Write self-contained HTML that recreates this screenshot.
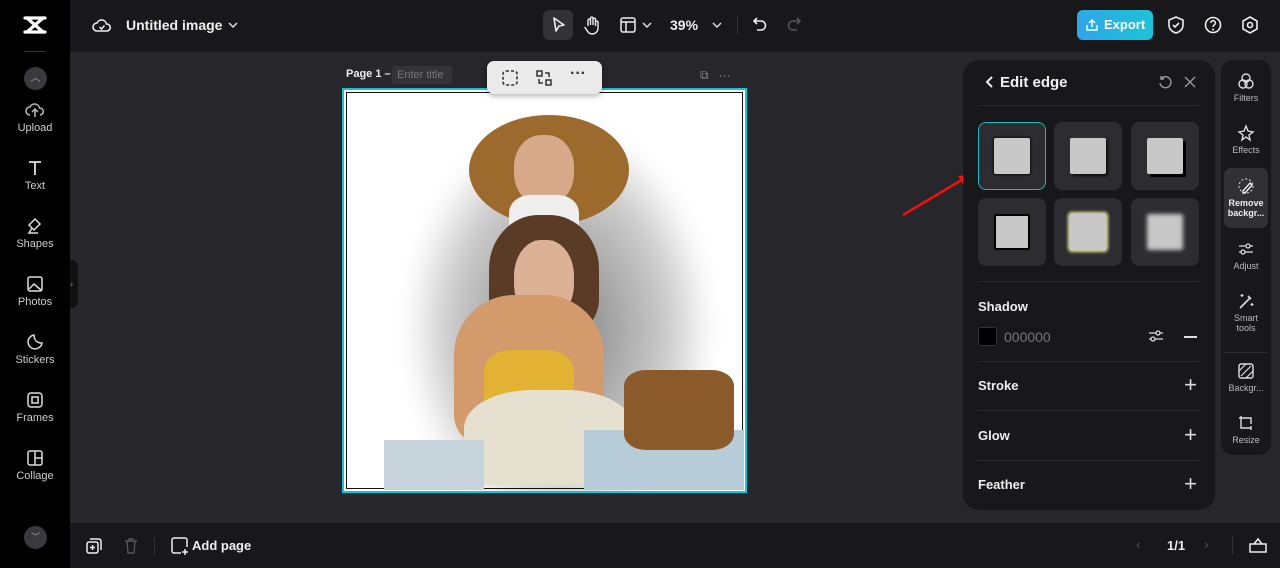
<!DOCTYPE html><html><head><style>
*{box-sizing:border-box;margin:0;padding:0}
body{width:1280px;height:568px;overflow:hidden;background:#26262b;font-family:"Liberation Sans",sans-serif;color:#e6e6e6;position:relative}
.abs{position:absolute}
.side{left:0;top:0;width:70px;height:568px;background:#000}
.si{position:absolute;left:0;width:70px;text-align:center;font-size:11px;color:#ccc}
.si svg{display:block;margin:0 auto 3px}
.top{left:70px;top:0;width:1210px;height:52px;background:#18181b}
.bot{left:70px;top:523px;width:1210px;height:45px;background:#18181b}
.panel{left:963px;top:60px;width:252px;height:450px;background:#18181b;border-radius:16px}
.rail{left:1221px;top:60px;width:50px;height:395px;background:#18181b;border-radius:12px}
.ri{position:absolute;left:0;width:50px;text-align:center;font-size:9px;color:#bbb;line-height:10px}
.ri svg{display:block;margin:0 auto 3px}
.tile{position:absolute;width:68px;height:68px;background:#2c2c31;border-radius:8px}
.tile i{position:absolute;left:16px;top:16px;width:36px;height:36px;background:#c8c8c8;border-radius:2px}
.row{position:absolute;left:15px;width:221px;font-size:13px;font-weight:bold;color:#eee}
.hr{position:absolute;left:15px;width:221px;height:1px;background:#2a2a2f}
.plus{position:absolute;right:2px;top:-3px;font-size:22px;font-weight:normal;color:#ddd;line-height:20px}
</style></head><body>
<div class="abs side">
 <svg class="abs" style="left:23px;top:15px" width="24" height="20" viewBox="0 0 24 20"><path d="M2 3h20M2 17h20M4 3L20 17M20 3L4 17" stroke="#fff" stroke-width="3.2" fill="none" stroke-linecap="round"/></svg>
 <div class="abs" style="left:24px;top:51px;width:22px;height:1px;background:#333"></div>
 <div class="abs" style="left:24px;top:67px;width:23px;height:23px;border-radius:50%;background:#3a3a3e;color:#aaa;font-size:10px;text-align:center;line-height:23px">︿</div>
 <div class="si" style="top:101px"><svg width="20" height="18" viewBox="0 0 20 18"><path d="M5 14a4 4 0 010-8 5 5 0 019.5 1A3.5 3.5 0 0115 14M10 9v7M7 11l3-3 3 3" stroke="#bbb" stroke-width="1.5" fill="none"/></svg>Upload</div>
 <div class="si" style="top:159px"><svg width="18" height="18" viewBox="0 0 18 18"><path d="M3 3h12M9 3v13" stroke="#ddd" stroke-width="1.8"/></svg>Text</div>
 <div class="si" style="top:217px"><svg width="18" height="18" viewBox="0 0 18 18"><path d="M3 8l6-6 5 5-6 6zM6 11l-3 5h9" stroke="#ddd" stroke-width="1.5" fill="none"/></svg>Shapes</div>
 <div class="si" style="top:275px"><svg width="18" height="18" viewBox="0 0 18 18"><rect x="2" y="2" width="14" height="14" rx="2" stroke="#ddd" stroke-width="1.5" fill="none"/><path d="M3 14l5-5 7 6" stroke="#ddd" stroke-width="1.5" fill="none"/></svg>Photos</div>
 <div class="si" style="top:333px"><svg width="18" height="18" viewBox="0 0 18 18"><path d="M16 10A7 7 0 118 2c0 4 2 8 8 8z" stroke="#ddd" stroke-width="1.5" fill="none"/></svg>Stickers</div>
 <div class="si" style="top:391px"><svg width="18" height="18" viewBox="0 0 18 18"><rect x="2" y="2" width="14" height="14" rx="3" stroke="#ddd" stroke-width="1.5" fill="none"/><rect x="6" y="6" width="6" height="6" stroke="#ddd" stroke-width="1.5" fill="none"/></svg>Frames</div>
 <div class="si" style="top:449px"><svg width="18" height="18" viewBox="0 0 18 18"><rect x="2" y="2" width="14" height="14" rx="2" stroke="#ddd" stroke-width="1.5" fill="none"/><path d="M9 2v14M9 9h7" stroke="#ddd" stroke-width="1.5"/></svg>Collage</div>
 <div class="abs" style="left:24px;top:526px;width:23px;height:23px;border-radius:50%;background:#3a3a3e;color:#aaa;font-size:9px;text-align:center;line-height:23px">﹀</div>
</div>
<div class="abs" style="left:70px;top:260px;width:8px;height:48px;background:#111;border-radius:0 6px 6px 0;color:#888;font-size:9px;line-height:48px">›</div>
<div class="abs top">
 <svg class="abs" style="left:22px;top:16px" width="20" height="18" viewBox="0 0 20 18"><path d="M5 15a4 4 0 010-8 5 5 0 019.5 1A3.5 3.5 0 0115 15z" stroke="#eee" stroke-width="1.6" fill="none"/><path d="M7.5 11l2 2 3-3.5" stroke="#eee" stroke-width="1.5" fill="none"/></svg>
 <div class="abs" style="left:56px;top:17px;font-size:14px;font-weight:bold;color:#eee">Untitled image</div>
 <svg class="abs" style="left:158px;top:21px" width="10" height="8"><path d="M1 2l4 4 4-4" stroke="#ddd" stroke-width="1.5" fill="none"/></svg>
 <div class="abs" style="left:473px;top:10px;width:30px;height:30px;background:#323237;border-radius:6px"></div>
 <svg class="abs" style="left:481px;top:16px" width="16" height="18"><path d="M3 2l10 7-5 1-3 5z" stroke="#eee" stroke-width="1.6" fill="none" stroke-linejoin="round"/></svg>
 <svg class="abs" style="left:513px;top:15px" width="18" height="20"><path d="M5 11V5a1.3 1.3 0 012.5 0v5V3a1.3 1.3 0 012.5 0v7V4a1.3 1.3 0 012.5 0v7V7a1.3 1.3 0 012.5 0v6c0 4-3 6-6 6-3 0-4-2-6-5l-1.5-2" stroke="#eee" stroke-width="1.4" fill="none"/></svg>
 <svg class="abs" style="left:550px;top:17px" width="16" height="16"><rect x="1" y="1" width="14" height="14" rx="2" stroke="#eee" stroke-width="1.5" fill="none"/><path d="M1 5h14M6 5v10" stroke="#eee" stroke-width="1.5"/></svg>
 <svg class="abs" style="left:572px;top:21px" width="10" height="8"><path d="M1 2l4 4 4-4" stroke="#ddd" stroke-width="1.5" fill="none"/></svg>
 <div class="abs" style="left:600px;top:17px;font-size:14px;font-weight:bold;color:#eee">39%</div>
 <svg class="abs" style="left:642px;top:21px" width="10" height="8"><path d="M1 2l4 4 4-4" stroke="#ddd" stroke-width="1.5" fill="none"/></svg>
 <div class="abs" style="left:667px;top:16px;width:1px;height:18px;background:#333"></div>
 <svg class="abs" style="left:682px;top:16px" width="16" height="16"><path d="M5 2L2 5l3 3M2 5h7a4.5 4.5 0 010 9H5" stroke="#eee" stroke-width="1.6" fill="none"/></svg>
 <svg class="abs" style="left:716px;top:16px" width="16" height="16"><path d="M11 2l3 3-3 3M14 5H7a4.5 4.5 0 000 9h4" stroke="#555" stroke-width="1.6" fill="none"/></svg>
 <div class="abs" style="left:1007px;top:10px;width:76px;height:30px;border-radius:6px;background:linear-gradient(90deg,#2ea6e8,#1cc3d8);color:#fff;font-weight:bold;font-size:13px;line-height:30px;padding-left:27px">Export</div>
 <svg class="abs" style="left:1015px;top:18px" width="14" height="14"><path d="M7 9V2M4 5l3-3 3 3M2 7v5h10V7" stroke="#fff" stroke-width="1.4" fill="none"/></svg>
 <svg class="abs" style="left:1097px;top:16px" width="18" height="18"><path d="M9 1l7 3v5c0 4-3 7-7 8-4-1-7-4-7-8V4z" stroke="#eee" stroke-width="1.6" fill="none"/><path d="M6 9l2 2 4-4" stroke="#eee" stroke-width="1.6" fill="none"/></svg>
 <svg class="abs" style="left:1134px;top:16px" width="18" height="18"><circle cx="9" cy="9" r="7.5" stroke="#eee" stroke-width="1.6" fill="none"/><path d="M6.8 7a2.3 2.3 0 114 1.5c-1 .8-1.8 1.2-1.8 2.5" stroke="#eee" stroke-width="1.5" fill="none"/><circle cx="9" cy="13.5" r="1" fill="#eee"/></svg>
 <svg class="abs" style="left:1171px;top:16px" width="18" height="18"><path d="M9 1l7 4v8l-7 4-7-4V5z" stroke="#eee" stroke-width="1.6" fill="none"/><circle cx="9" cy="9" r="2.5" stroke="#eee" stroke-width="1.6" fill="none"/></svg>
</div>
<div class="abs" style="left:346px;top:68px;font-size:11px;font-weight:bold;color:#eee">Page 1 –</div>
<div class="abs" style="left:392px;top:66px;width:60px;height:18px;background:#333338;border-radius:3px;font-size:11px;color:#777;line-height:18px;padding-left:5px">Enter title</div>
<div class="abs" style="left:700px;top:68px;font-size:12px;color:#888">⧉ &nbsp;&nbsp;···</div>
<div class="abs" style="left:342px;top:88px;width:405px;height:405px;border:2px solid #18c3d6;background:#fff;overflow:hidden">
 <div class="abs" style="left:2px;top:2px;width:397px;height:397px;border:1px solid #111"></div>
 <div class="abs" style="left:60px;top:30px;width:310px;height:380px;background:radial-gradient(ellipse at 50% 55%,rgba(0,0,0,.5),rgba(0,0,0,.2) 50%,rgba(0,0,0,0) 70%);filter:blur(10px)"></div>
 <div class="abs" style="left:125px;top:25px;width:160px;height:110px;border-radius:50%;background:#9b6a2c"></div>
 <div class="abs" style="left:170px;top:45px;width:60px;height:70px;border-radius:45%;background:#d7a88a"></div>
 <div class="abs" style="left:165px;top:105px;width:70px;height:60px;border-radius:30%;background:#eee"></div>
 <div class="abs" style="left:145px;top:125px;width:110px;height:120px;border-radius:45% 45% 30% 30%;background:#5a3b25"></div>
 <div class="abs" style="left:170px;top:150px;width:60px;height:80px;border-radius:45%;background:#dcb196"></div>
 <div class="abs" style="left:110px;top:205px;width:150px;height:150px;border-radius:40% 40% 20% 20%;background:#d39a6c"></div>
 <div class="abs" style="left:140px;top:260px;width:90px;height:70px;border-radius:30%;background:#e3b133"></div>
 <div class="abs" style="left:120px;top:300px;width:170px;height:95px;border-radius:40% 40% 0 0;background:#e5e0cf"></div>
 <div class="abs" style="left:240px;top:340px;width:160px;height:60px;background:#b7cbd8"></div>
 <div class="abs" style="left:280px;top:280px;width:110px;height:80px;border-radius:20%;background:#8a5a2a"></div>
 <div class="abs" style="left:40px;top:350px;width:100px;height:50px;background:#c6d3db"></div>
</div>
<div class="abs" style="left:487px;top:61px;width:115px;height:33px;background:#eaeaea;border-radius:7px;box-shadow:0 2px 6px rgba(0,0,0,.3)">
 <svg class="abs" style="left:15px;top:9px" width="16" height="16"><rect x="1" y="1" width="14" height="14" rx="3" stroke="#333" stroke-width="1.6" stroke-dasharray="3 2" fill="none"/></svg>
 <svg class="abs" style="left:49px;top:9px" width="16" height="16"><rect x="1" y="1" width="5" height="5" stroke="#333" stroke-width="1.5" fill="none"/><rect x="10" y="10" width="5" height="5" stroke="#333" stroke-width="1.5" fill="none"/><path d="M9 3h4v4M7 13H3V9" stroke="#333" stroke-width="1.5" fill="none"/></svg>
 <div class="abs" style="left:83px;top:4px;font-size:16px;color:#333;font-weight:bold">···</div>
</div>
<svg class="abs" style="left:900px;top:170px" width="75" height="50"><path d="M3 45L65 8" stroke="#e11" stroke-width="2.5"/><path d="M72 4L58 6l6 10z" fill="#e11"/></svg>
<div class="abs panel">
 <svg class="abs" style="left:21px;top:15px" width="10" height="14"><path d="M8 2L3 7l5 5" stroke="#eee" stroke-width="2" fill="none"/></svg>
 <div class="abs" style="left:37px;top:14px;font-size:15px;font-weight:bold;color:#f2f2f2">Edit edge</div>
 <svg class="abs" style="left:195px;top:15px" width="14" height="14"><path d="M3 4a5.5 5.5 0 11-1 4M3 1v3h3" stroke="#999" stroke-width="1.4" fill="none"/></svg>
 <svg class="abs" style="left:221px;top:16px" width="12" height="12"><path d="M1 1l10 10M11 1L1 11" stroke="#999" stroke-width="1.4"/></svg>
 <div class="hr" style="top:45px"></div>
 <div class="tile" style="left:15px;top:62px;border:1px solid #1fb5c4"><i style="left:15px;top:15px;box-shadow:0 0 2px 1px #111"></i></div>
 <div class="tile" style="left:91px;top:62px"><i style="box-shadow:2px 2px 2px #111"></i></div>
 <div class="tile" style="left:168px;top:62px"><i style="box-shadow:3px 3px 0 #000"></i></div>
 <div class="tile" style="left:15px;top:138px"><i style="border:2px solid #000"></i></div>
 <div class="tile" style="left:91px;top:138px"><i style="box-shadow:0 0 3px 2px #e8e8a0"></i></div>
 <div class="tile" style="left:168px;top:138px"><i style="filter:blur(2px)"></i></div>
 <div class="hr" style="top:221px"></div>
 <div class="row" style="top:239px">Shadow</div>
 <div class="abs" style="left:15px;top:267px;width:19px;height:19px;background:#000;border:1px solid #333;border-radius:3px"></div>
 <div class="abs" style="left:41px;top:269px;font-size:14px;color:#777">000000</div>
 <svg class="abs" style="left:185px;top:269px" width="16" height="14"><path d="M1 4h14M1 10h14" stroke="#ddd" stroke-width="1.3"/><circle cx="10" cy="4" r="2" fill="#18181b" stroke="#ddd" stroke-width="1.3"/><circle cx="5" cy="10" r="2" fill="#18181b" stroke="#ddd" stroke-width="1.3"/></svg>
 <div class="abs" style="left:221px;top:276px;width:13px;height:1.5px;background:#ddd"></div>
 <div class="hr" style="top:301px"></div>
 <div class="row" style="top:318px">Stroke<span class="plus">+</span></div>
 <div class="hr" style="top:350px"></div>
 <div class="row" style="top:368px">Glow<span class="plus">+</span></div>
 <div class="hr" style="top:400px"></div>
 <div class="row" style="top:417px">Feather<span class="plus">+</span></div>
</div>
<div class="abs rail">
 <div class="ri" style="top:12px"><svg width="18" height="18"><circle cx="9" cy="6" r="4" stroke="#ddd" stroke-width="1.4" fill="none"/><circle cx="6" cy="12" r="4" stroke="#ddd" stroke-width="1.4" fill="none"/><circle cx="12" cy="12" r="4" stroke="#ddd" stroke-width="1.4" fill="none"/></svg>Filters</div>
 <div class="ri" style="top:64px"><svg width="18" height="18"><path d="M9 2l2 5 5 1-4 3 1 5-4-3-4 3 1-5-4-3 5-1z" stroke="#ddd" stroke-width="1.4" fill="none"/></svg>Effects</div>
 <div class="abs" style="left:3px;top:108px;width:44px;height:60px;background:#303035;border-radius:7px"></div>
 <div class="ri" style="top:117px;color:#eee;font-weight:bold"><svg width="18" height="18"><circle cx="9" cy="9" r="7" stroke="#ccc" stroke-width="1.2" stroke-dasharray="2 2" fill="none"/><path d="M6 14l7-8 2 2-7 8H6z" stroke="#eee" stroke-width="1.4" fill="none"/></svg>Remove<br>backgr...</div>
 <div class="ri" style="top:180px"><svg width="18" height="18"><path d="M2 6h14M2 12h14" stroke="#ddd" stroke-width="1.3"/><circle cx="11" cy="6" r="2" fill="#18181b" stroke="#ddd" stroke-width="1.3"/><circle cx="6" cy="12" r="2" fill="#18181b" stroke="#ddd" stroke-width="1.3"/></svg>Adjust</div>
 <div class="ri" style="top:232px"><svg width="18" height="18"><path d="M3 16L13 6M11 4l3 3" stroke="#ddd" stroke-width="1.6"/><path d="M5 2v3M3.5 3.5h3M15 11v3M13.5 12.5h3" stroke="#ddd" stroke-width="1.2"/></svg>Smart<br>tools</div>
 <div class="abs" style="left:3px;top:292px;width:44px;height:1px;background:#2c2c31"></div>
 <div class="ri" style="top:302px"><svg width="18" height="18"><rect x="2" y="2" width="14" height="14" rx="2" stroke="#ddd" stroke-width="1.4" fill="none"/><path d="M4 14L14 4M2 9l7-7M9 16l7-7" stroke="#ddd" stroke-width="1.2"/></svg>Backgr...</div>
 <div class="ri" style="top:354px"><svg width="18" height="18"><path d="M4 2v12h10M4 4h10v6M2 4h2M14 12v4" stroke="#ddd" stroke-width="1.4" fill="none"/></svg>Resize</div>
</div>
<div class="abs bot">
 <svg class="abs" style="left:16px;top:15px" width="16" height="16"><rect x="1" y="4" width="11" height="11" rx="2" stroke="#eee" stroke-width="1.5" fill="none"/><path d="M4 1h9a2 2 0 012 2v9M6.5 7v5M4 9.5h5" stroke="#eee" stroke-width="1.5" fill="none"/></svg>
 <svg class="abs" style="left:54px;top:15px" width="14" height="16"><path d="M1 3h12M5 3V1h4v2M3 3l1 12h6l1-12" stroke="#555" stroke-width="1.4" fill="none"/></svg>
 <div class="abs" style="left:84px;top:14px;width:1px;height:18px;background:#333"></div>
 <svg class="abs" style="left:101px;top:14px" width="18" height="18"><path d="M10 16H3a2 2 0 01-2-2V3a2 2 0 012-2h11a2 2 0 012 2v7M14 12v6M11 15h6" stroke="#eee" stroke-width="1.5" fill="none"/></svg>
 <div class="abs" style="left:122px;top:15px;font-size:13px;font-weight:bold;color:#eee">Add page</div>
 <div class="abs" style="left:1066px;top:13px;font-size:14px;color:#555">‹</div>
 <div class="abs" style="left:1097px;top:15px;font-size:13px;font-weight:bold;color:#eee">1/1</div>
 <div class="abs" style="left:1134px;top:13px;font-size:14px;color:#555">›</div>
 <div class="abs" style="left:1162px;top:13px;width:1px;height:18px;background:#333"></div>
 <svg class="abs" style="left:1179px;top:14px" width="18" height="16"><path d="M1 7h16v8H1zM5 7l4-5 4 5" stroke="#eee" stroke-width="1.5" fill="none"/></svg>
</div>
</body></html>
